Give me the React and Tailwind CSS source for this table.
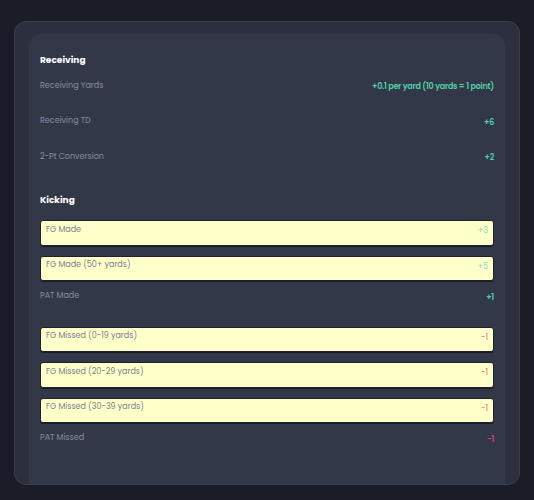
import React from "react";

const receiving = [
  { label: "Receiving Yards", value: "+0.1 per yard (10 yards = 1 point)" },
  { label: "Receiving TD", value: "+6" },
  { label: "2-Pt Conversion", value: "+2" },
];

const kicking = [
  { label: "FG Made", value: "+3", box: true },
  { label: "FG Made (50+ yards)", value: "+5", box: true },
  { label: "PAT Made", value: "+1" },
  { label: "FG Missed (0-19 yards)", value: "-1", box: true },
  { label: "FG Missed (20-29 yards)", value: "-1", box: true },
  { label: "FG Missed (30-39 yards)", value: "-1", box: true },
  { label: "PAT Missed", value: "-1" },
];

function ScoringRow({ label, value, box }) {
  const negative = value.startsWith("-");

  if (box) {
    return (
      <div className="h-[25.5px] mb-[10px] flex justify-between items-start px-[5px] pt-[3.5px] rounded-[3px] border border-[#1d2030] bg-[#ffffca] shadow-[0_1px_0_#1a1c27]">
        <span className="text-[8px] leading-[10px] text-[#7a7f92]">{label}</span>
        <span
          className={
            "text-[8px] leading-[10px] mt-[1.5px] " +
            (negative ? "text-[#e5687e]" : "text-[#86d8c4]")
          }
        >
          {value}
        </span>
      </div>
    );
  }

  return (
    <div className="h-[25.5px] mb-[10px] flex justify-between items-start">
      <span className="text-[8px] leading-[10px] text-[#858ca3]">{label}</span>
      <span
        className={
          "text-[8px] leading-[10px] font-semibold tracking-[-0.25px] mt-[1.5px] " +
          (negative ? "text-[#e33b62]" : "text-[#52cfaa]")
        }
      >
        {value}
      </span>
    </div>
  );
}

export default function App() {
  return (
    <div
      className="w-[534px] h-[500px] bg-[#1a1c27] pt-[21px] pl-[14px]"
      style={{ fontFamily: "Poppins, Inter, 'Noto Sans', sans-serif" }}
    >
      <div className="w-[506px] h-[464px] rounded-[12px] border border-[#393e4f] bg-[#2b2f3e] pt-[12px] px-[14px] overflow-hidden">
        <div className="rounded-t-[12px] bg-[#333849] px-[11px] pt-[19px] pb-[40px]">
          <h2 className="h-[14px] leading-[14px] text-[9px] font-bold text-white mb-[13.5px]">
            Receiving
          </h2>
          {receiving.map((row) => (
            <ScoringRow key={row.label} {...row} />
          ))}

          <h2 className="h-[14px] leading-[14px] text-[9px] font-bold text-white mt-[16px] mb-[13px]">
            Kicking
          </h2>
          {kicking.map((row) => (
            <ScoringRow key={row.label} {...row} />
          ))}
        </div>
      </div>
    </div>
  );
}
